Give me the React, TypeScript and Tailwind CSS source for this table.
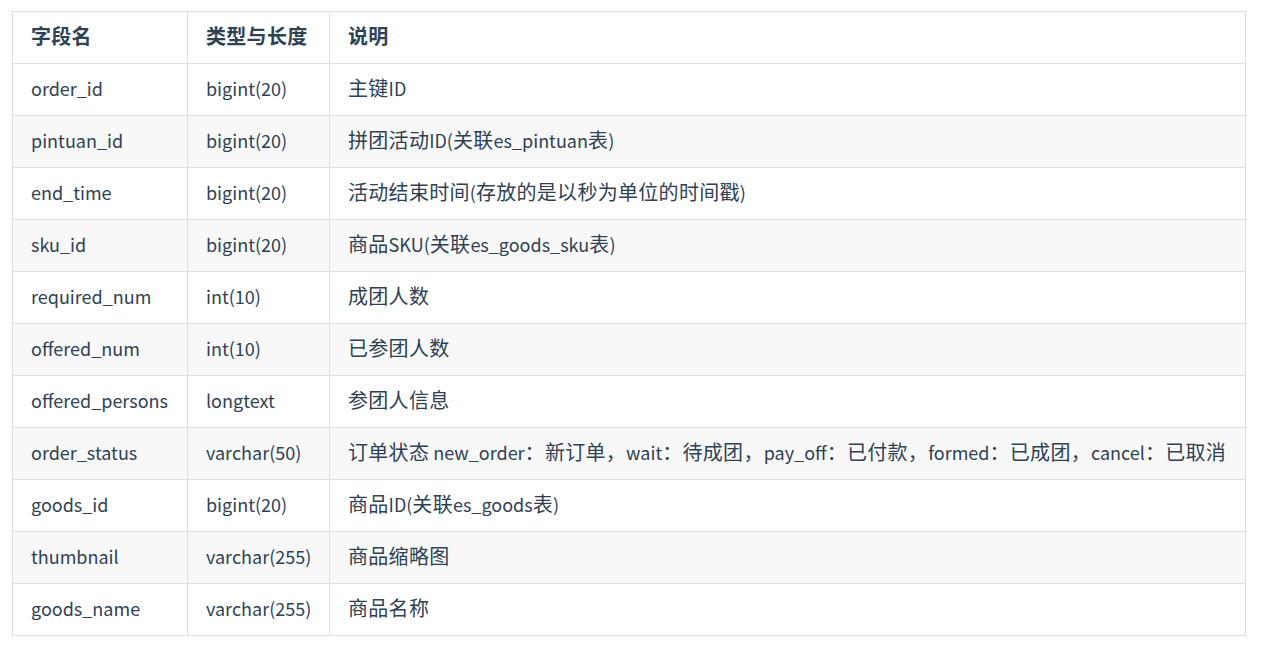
import React from 'react';

const rows: [string, string, string][] = [
  ['order_id', 'bigint(20)', '主键ID'],
  ['pintuan_id', 'bigint(20)', '拼团活动ID(关联es_pintuan表)'],
  ['end_time', 'bigint(20)', '活动结束时间(存放的是以秒为单位的时间戳)'],
  ['sku_id', 'bigint(20)', '商品SKU(关联es_goods_sku表)'],
  ['required_num', 'int(10)', '成团人数'],
  ['offered_num', 'int(10)', '已参团人数'],
  ['offered_persons', 'longtext', '参团人信息'],
  ['order_status', 'varchar(50)', '订单状态 new_order：新订单，wait：待成团，pay_off：已付款，formed：已成团，cancel：已取消'],
  ['goods_id', 'bigint(20)', '商品ID(关联es_goods表)'],
  ['thumbnail', 'varchar(255)', '商品缩略图'],
  ['goods_name', 'varchar(255)', '商品名称'],
];

const cell = 'border border-[#dfdfdf] px-[18px] pb-[3px] h-[52px] align-middle whitespace-nowrap leading-[26px]';

// CJK glyphs in the reference run a bit larger than the latin ones
const Mixed = ({ text }: { text: string }) => (
  <>
    {text.split(/([\u3000-\u9fff\uff00-\uffef]+)/).map((part, i) =>
      /[\u3000-\u9fff\uff00-\uffef]/.test(part) ? (
        <span key={i} className="text-[20px] tracking-[0.3px]">{part}</span>
      ) : (
        <span key={i}>{part}</span>
      )
    )}
  </>
);

export default function App() {
  return (
    <div
      className="bg-white min-h-[647px] pt-[11px] pl-[12px] text-[#2f4254] text-[18px]"
      style={{ fontFamily: '"Noto Sans CJK SC", "Noto Sans", sans-serif' }}
    >
      <table className="border-collapse table-fixed w-[1234px]">
        <colgroup>
          <col className="w-[175px]" />
          <col className="w-[142px]" />
          <col />
        </colgroup>
        <thead>
          <tr>
            <th className={`${cell} text-left font-bold`}><Mixed text="字段名" /></th>
            <th className={`${cell} text-left font-bold`}><Mixed text="类型与长度" /></th>
            <th className={`${cell} text-left font-bold`}><Mixed text="说明" /></th>
          </tr>
        </thead>
        <tbody>
          {rows.map(([name, type, desc], i) => (
            <tr key={name} className={i % 2 === 1 ? 'bg-[#f8f8f8]' : 'bg-white'}>
              <td className={cell}>{name}</td>
              <td className={cell}>{type}</td>
              <td className={cell}><Mixed text={desc} /></td>
            </tr>
          ))}
        </tbody>
      </table>
    </div>
  );
}
